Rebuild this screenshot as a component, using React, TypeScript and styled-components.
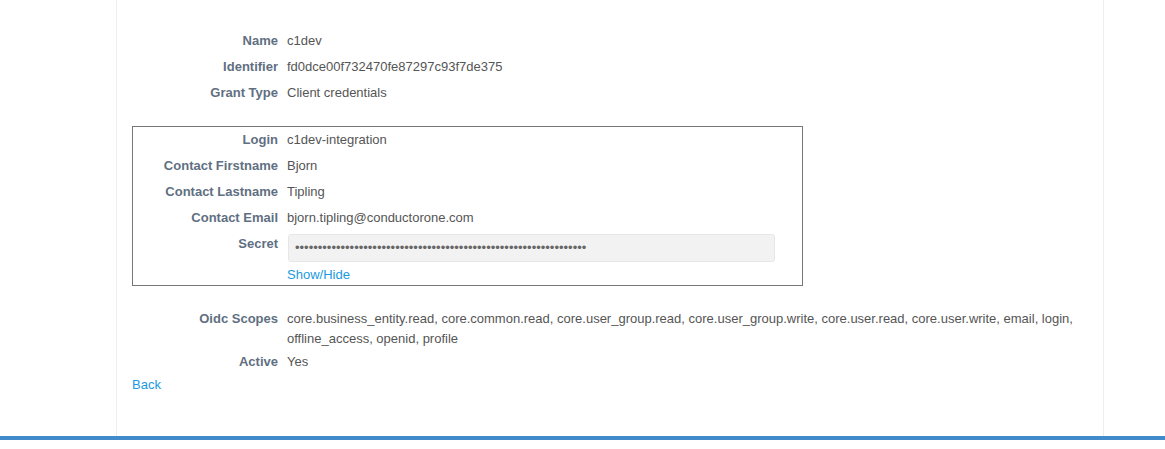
import React, { useState } from "react";
import styled, { createGlobalStyle } from "styled-components";

const GlobalStyle = createGlobalStyle`
  html, body {
    margin: 0;
    padding: 0;
    background: #fff;
  }
  body {
    font-family: "Liberation Sans", Arial, sans-serif;
    font-size: 13px;
    line-height: 20px;
    color: #555;
  }
`;

const Page = styled.div`
  width: 1165px;
  height: 449px;
  overflow: hidden;
  display: flex;
  flex-direction: column;
`;

const Container = styled.div`
  width: 955px;
  height: 405px;
  margin-left: 116px;
  padding: 31px 16px 0 15px;
  border-left: 1px solid #eee;
  border-right: 1px solid #eee;
`;

const BottomBar = styled.div`
  height: 4px;
  background: #428bca;
`;

const Row = styled.div<{ $pad?: number; $labelWidth?: number }>`
  display: grid;
  grid-template-columns: ${({ $labelWidth = 146 }) => $labelWidth}px 1fr;
  column-gap: 9px;
  padding-bottom: ${({ $pad = 6 }) => $pad}px;
`;

const Label = styled.div`
  font-weight: bold;
  color: #5f6f82;
  text-align: right;
`;

const Value = styled.div`
  color: #555;
`;

const Box = styled.div`
  width: 669px;
  margin: 17px 0 23px 0;
  padding-top: 3px;
  border: 1px solid #777;
`;

const SecretField = styled.div`
  box-sizing: border-box;
  width: 487px;
  height: 28px;
  margin-left: 1px;
  padding: 0 6px;
  display: flex;
  align-items: center;
  background: #f2f2f2;
  border: 1px solid #e6e6e6;
  border-radius: 3px;
  color: #666;
  overflow: hidden;
  white-space: nowrap;
`;

const Link = styled.a`
  color: #1a9ae0;
  text-decoration: none;
  cursor: pointer;
`;

const ToggleLine = styled.div`
  margin-top: 3px;
`;

const BackLine = styled.div`
  margin-top: 3px;
`;

const secret = "x".repeat(64);

export default function App() {
  const [shown, setShown] = useState(false);

  return (
    <>
      <GlobalStyle />
      <Page>
        <Container>
          <Row>
            <Label>Name</Label>
            <Value>c1dev</Value>
          </Row>
          <Row>
            <Label>Identifier</Label>
            <Value>fd0dce00f732470fe87297c93f7de375</Value>
          </Row>
          <Row>
            <Label>Grant Type</Label>
            <Value>Client credentials</Value>
          </Row>

          <Box>
            <Row $labelWidth={145}>
              <Label>Login</Label>
              <Value>c1dev-integration</Value>
            </Row>
            <Row $labelWidth={145}>
              <Label>Contact Firstname</Label>
              <Value>Bjorn</Value>
            </Row>
            <Row $labelWidth={145}>
              <Label>Contact Lastname</Label>
              <Value>Tipling</Value>
            </Row>
            <Row $labelWidth={145}>
              <Label>Contact Email</Label>
              <Value>bjorn.tipling@conductorone.com</Value>
            </Row>
            <Row $labelWidth={145} $pad={0}>
              <Label>Secret</Label>
              <Value>
                <SecretField>{shown ? secret : "\u2022".repeat(64)}</SecretField>
                <ToggleLine>
                  <Link onClick={() => setShown(!shown)}>Show/Hide</Link>
                </ToggleLine>
              </Value>
            </Row>
          </Box>

          <Row $pad={3}>
            <Label>Oidc Scopes</Label>
            <Value>
              core.business_entity.read, core.common.read, core.user_group.read,
              core.user_group.write, core.user.read, core.user.write, email,
              login, offline_access, openid, profile
            </Value>
          </Row>
          <Row $pad={0}>
            <Label>Active</Label>
            <Value>Yes</Value>
          </Row>
          <BackLine>
            <Link>Back</Link>
          </BackLine>
        </Container>
        <BottomBar />
      </Page>
    </>
  );
}
